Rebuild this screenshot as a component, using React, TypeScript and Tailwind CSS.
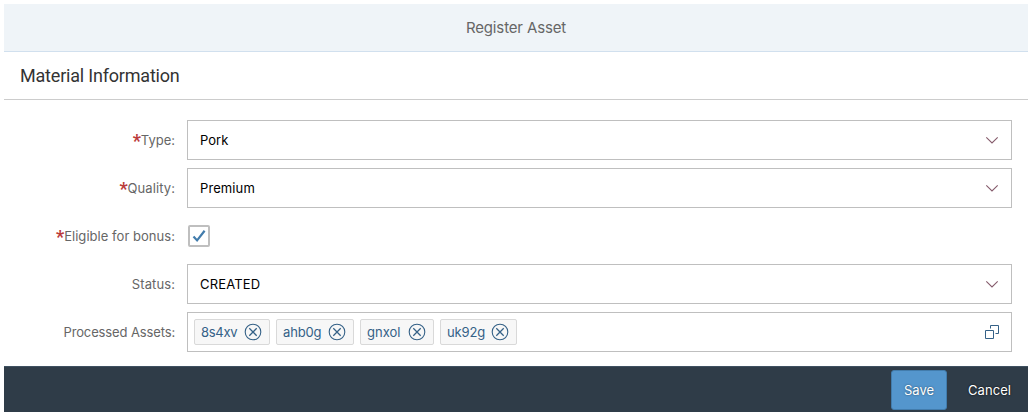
import type { ReactNode } from "react";

function Chevron() {
  return (
    <svg className="h-4 w-4 shrink-0" viewBox="0 0 16 16" fill="none" stroke="#865c6c" strokeWidth="1.1">
      <path d="M2.3 5.3 8 11l5.7-5.7" />
    </svg>
  );
}

function CloseIcon() {
  return (
    <svg className="h-[18px] w-[18px] shrink-0" viewBox="0 0 18 18" fill="none" stroke="#346187" strokeWidth="1.1">
      <circle cx="9" cy="9" r="7.8" />
      <path d="m5.3 5.3 7.4 7.4M12.7 5.3l-7.4 7.4" strokeWidth="1.25" />
    </svg>
  );
}

function ValueHelpIcon() {
  return (
    <svg className="h-4 w-4 shrink-0" viewBox="0 0 16 16" fill="none" stroke="#346187">
      <path d="M1.5 6.5h8v8h-8zM6.5 4.5v-3h8v8h-3" />
    </svg>
  );
}

type RowProps = { label: string; required?: boolean; tracking?: string; children: ReactNode };

function Row({ label, required, tracking = "", children }: RowProps) {
  return (
    <div className="flex h-10 items-center">
      <div className="mr-3 flex w-[171px] shrink-0 items-center justify-end text-[#666666]">
        {required && <span className="h-5 font-['Roboto',sans-serif] text-[18px] leading-[21px] font-bold text-[#bb3b3b]">*</span>}
        <span className={tracking}>{label}:</span>
      </div>
      {children}
    </div>
  );
}

function Select({ value, tracking = "" }: { value: string; tracking?: string }) {
  return (
    <div className="flex h-10 flex-1 items-center justify-between border border-[#bfbfbf] bg-white pr-[11px] pl-3 text-black">
      <span className={tracking}>{value}</span>
      <Chevron />
    </div>
  );
}

const tokens = [
  { id: "8s4xv", style: "w-[76px] tracking-[-0.3px]" },
  { id: "ahb0g", style: "w-[78px] tracking-[-0.15px]" },
  { id: "gnxol", style: "w-[74px]" },
  { id: "uk92g", style: "w-[77px] tracking-[-0.15px]" },
];

export default function App() {
  return (
    <div className="h-[414px] w-[1031px] overflow-hidden bg-white pt-1 pr-[3px] pl-1 font-['Inter',sans-serif] text-[13px] leading-5">
      <div className="flex h-12 items-center justify-center border-b border-[#d1e0ee] bg-[#eff4f8] text-[15px] tracking-[-0.14px] text-[#666666]">
        Register Asset
      </div>
      <div className="flex h-12 items-center border-b border-[#cccccc] px-4 font-['Roboto',sans-serif] text-lg tracking-[-0.2px] text-[#333333]">
        Material Information
      </div>
      <div className="flex h-[266px] flex-col gap-2 pt-5 pr-4">
        <Row label="Type" required><Select value="Pork" /></Row>
        <Row label="Quality" required tracking="tracking-[0.08px]"><Select value="Premium" tracking="tracking-[0.1px]" /></Row>
        <Row label="Eligible for bonus" required tracking="tracking-[0.04px]">
          <div className="ml-px flex h-[22px] w-[22px] items-center justify-center rounded-[2px] border-2 border-[#bfbfbf]">
            <svg className="h-[18px] w-[18px] shrink-0" viewBox="0 0 18 18" fill="none" stroke="#427cac" strokeWidth="2.2">
              <path d="m3.5 9.4 3.6 4 7.5-9.6" />
            </svg>
          </div>
        </Row>
        <Row label="Status" tracking="tracking-[0.1px]"><Select value="CREATED" tracking="tracking-[0.15px]" /></Row>
        <Row label="Processed Assets" tracking="tracking-[-0.13px]">
          <div className="flex h-10 flex-1 items-center justify-between border border-[#bfbfbf] pr-[11px] pl-1.5">
            <div className="flex gap-1.5">
              {tokens.map((t) => (
                <div key={t.id} className={`flex h-[26px] items-center justify-between rounded-[2px] border border-[#d9d9d9] bg-[#f7f7f7] pr-[7px] pl-1.5 text-[#346187] ${t.style}`}>
                  <span>{t.id}</span>
                  <CloseIcon />
                </div>
              ))}
            </div>
            <ValueHelpIcon />
          </div>
        </Row>
      </div>
      <div className="flex h-[46px] items-center justify-end gap-2 border-t border-[#3f5161] bg-[#2f3c48] pt-[3px] pb-0.5 text-white">
        <button className="h-10 w-14 rounded-[3px] border border-[#427cac] bg-[#5496cd] [text-shadow:0_0_2px_#0008]">Save</button>
        <button className="mr-[9px] h-10 w-16 pl-[5px] tracking-[0.08px] [text-shadow:0_0_2px_#000]">Cancel</button>
      </div>
    </div>
  );
}
